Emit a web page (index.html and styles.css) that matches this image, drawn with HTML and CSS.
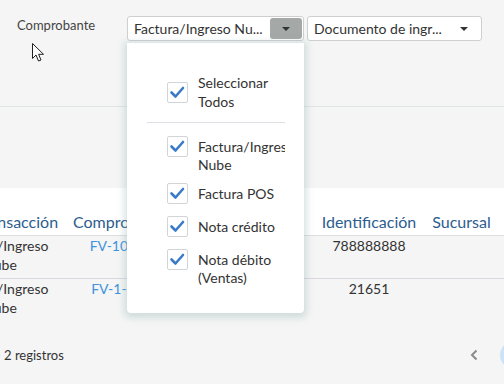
FILE: index.html
```html
<!DOCTYPE html>
<html lang="es">
<head>
    <meta charset="UTF-8">
    <meta name="viewport" content="width=device-width, initial-scale=1.0">
    <title>Documentos de ingreso</title>
    <link rel="stylesheet" href="styles.css">
</head>
<body>
    <div class="filters">
        <span class="field-label">Comprobante</span>
        <div class="select-wrap">
            <div class="select select-open">
                <span class="select-text">Factura/Ingreso Nu...</span>
                <span class="select-btn"><span class="caret"></span></span>
            </div>
            <div class="dropdown">
                <div class="check-all">
                    <span class="checkbox">
                        <svg width="21" height="21" viewBox="0 0 21 21"><polyline points="4.5,10.5 8.5,14.5 16,6" /></svg>
                    </span>
                    <span class="check-text">Seleccionar Todos</span>
                </div>
                <div class="divider"></div>
                <div class="option">
                    <span class="checkbox">
                        <svg width="21" height="21" viewBox="0 0 21 21"><polyline points="4.5,10.5 8.5,14.5 16,6" /></svg>
                    </span>
                    <span class="opt-text">Factura/Ingreso Nube</span>
                </div>
                <div class="option">
                    <span class="checkbox">
                        <svg width="21" height="21" viewBox="0 0 21 21"><polyline points="4.5,10.5 8.5,14.5 16,6" /></svg>
                    </span>
                    <span class="opt-text">Factura POS</span>
                </div>
                <div class="option">
                    <span class="checkbox">
                        <svg width="21" height="21" viewBox="0 0 21 21"><polyline points="4.5,10.5 8.5,14.5 16,6" /></svg>
                    </span>
                    <span class="opt-text">Nota crédito</span>
                </div>
                <div class="option">
                    <span class="checkbox">
                        <svg width="21" height="21" viewBox="0 0 21 21"><polyline points="4.5,10.5 8.5,14.5 16,6" /></svg>
                    </span>
                    <span class="opt-text">Nota débito (Ventas)</span>
                </div>
            </div>
        </div>
        <div class="select select-doc">
            <span class="select-text">Documento de ingr...</span>
            <span class="caret-box"><span class="caret"></span></span>
        </div>
    </div>

    <div class="table-area">
        <table class="grid">
            <colgroup>
                <col class="c-trans">
                <col class="c-comp">
                <col class="c-date">
                <col class="c-id">
                <col class="c-branch">
                <col class="c-total">
            </colgroup>
            <thead>
                <tr>
                    <th class="th-trans">Transacción</th>
                    <th class="th-comp">Comprobante</th>
                    <th></th>
                    <th>Identificación</th>
                    <th>Sucursal</th>
                    <th>Total</th>
                </tr>
            </thead>
            <tbody>
                <tr>
                    <td>Factura/Ingreso Nube</td>
                    <td><a href="#" class="doc-link">FV-1002</a></td>
                    <td></td>
                    <td>788888888</td>
                    <td></td>
                    <td>$ 12.000</td>
                </tr>
                <tr>
                    <td>Factura/Ingreso Nube</td>
                    <td><a href="#" class="doc-link">FV-1-18</a></td>
                    <td></td>
                    <td>21651</td>
                    <td></td>
                    <td>$ 8.500</td>
                </tr>
            </tbody>
        </table>
    </div>

    <div class="pager">
        <span class="pager-info">1 - 2 registros</span>
        <div class="pager-nav">
            <svg class="chevron" width="8" height="12" viewBox="0 0 8 12"><polyline points="6.5,1.5 2,6 6.5,10.5" /></svg>
            <span class="page-dot"></span>
        </div>
    </div>

    <svg class="cursor" width="13" height="20" viewBox="0 0 13 20">
        <path d="M0.5 0.5 L0.5 15.5 L4 12 L6.5 18 L9 17 L6.6 11.3 L11.5 11.3 Z" />
    </svg>
</body>
</html>
```

FILE: styles.css
```css
body {
    margin: 0;
    width: 504px;
    height: 384px;
    position: relative;
    overflow: hidden;
    background-color: #f5f5f5;
    font-family: Lato, "Noto Sans", sans-serif;
    color: #333;
}
.filters {
    display: flex;
    align-items: flex-start;
    height: 90px;
    padding-top: 16px;
    border-bottom: 1px solid #dfe5e5;
}
.field-label {
    width: 110px;
    padding-left: 17px;
    font-size: 13px;
    line-height: 18px;
    color: #444;
}
.select-wrap {
    position: relative;
}
.select {
    box-sizing: border-box;
    display: flex;
    align-items: stretch;
    height: 25px;
    padding: 1px 1px 1px 6px;
    background-color: white;
    border: 1px solid #cfcfcf;
    border-radius: 3px;
}
.select-open {
    width: 177px;
}
.select-doc {
    width: 175px;
    margin-left: 3px;
}
.select-text {
    flex: 1;
    font-size: 14px;
    line-height: 21px;
    white-space: nowrap;
    overflow: hidden;
}
.select-btn,
.caret-box {
    width: 32px;
    display: flex;
    align-items: center;
    justify-content: center;
    border-radius: 3px;
}
.select-btn {
    background-color: #a4a9a7;
}
.caret {
    width: 0;
    height: 0;
    border-left: 4px solid transparent;
    border-right: 4px solid transparent;
    border-top: 4px solid #333;
}
.dropdown {
    position: absolute;
    top: 27px;
    left: 0;
    z-index: 5;
    box-sizing: border-box;
    width: 177px;
    padding: 30px 19px 17px 20px;
    background-color: white;
    border-radius: 0 0 4px 4px;
    box-shadow: 0 2px 7px 3px rgba(140, 175, 175, 0.35);
}
.check-all {
    display: flex;
    align-items: center;
    padding-left: 20px;
}
.check-text {
    font-size: 14px;
    line-height: 19px;
    overflow: hidden;
}
.divider {
    height: 1px;
    margin: 11px 0 13px;
    background-color: #e3dfe7;
}
.option {
    box-sizing: border-box;
    display: flex;
    align-items: flex-start;
    min-height: 33px;
    padding: 0 0 9px 20px;
}
.opt-text {
    padding-top: 2px;
    font-size: 14px;
    line-height: 18px;
    overflow: hidden;
}
.checkbox {
    flex: none;
    box-sizing: border-box;
    width: 21px;
    height: 21px;
    margin-right: 10px;
    border: 1px solid #d2d5d8;
    border-radius: 2px;
    background-color: white;
}
.checkbox svg {
    display: block;
    margin: -1px;
}
.checkbox polyline {
    fill: none;
    stroke: #3a7bc8;
    stroke-width: 2.6;
    stroke-linecap: round;
    stroke-linejoin: round;
}
.table-area {
    margin-top: 81px;
    overflow: hidden;
}
.grid {
    width: 660px;
    margin-left: -60px;
    table-layout: fixed;
    border-collapse: collapse;
}
.c-trans { width: 120px; }
.c-comp { width: 114px; }
.c-date { width: 136px; }
.c-id { width: 118px; }
.c-branch { width: 67px; }
.c-total { width: 105px; }
th {
    padding: 24px 0 3px;
    background-color: white;
    color: #2c5d8f;
    font-size: 16px;
    font-weight: normal;
    line-height: 20px;
    text-align: center;
    white-space: nowrap;
    border-bottom: 1px solid #dedede;
}
.th-trans {
    padding-left: 34px;
}
.th-comp {
    padding-left: 8px;
}
td {
    padding: 0 4px 4px;
    font-size: 14px;
    line-height: 19px;
    text-align: center;
    vertical-align: top;
    border-bottom: 1px solid #dcd6e0;
}
tbody tr:last-child td {
    border-bottom: none;
}
.doc-link {
    color: #3d93dc;
    text-decoration: none;
}
.pager {
    display: flex;
    justify-content: space-between;
    align-items: center;
    height: 30px;
    margin-top: 19px;
}
.pager-info {
    margin-left: -15px;
    font-size: 13px;
}
.pager-nav {
    display: flex;
    align-items: center;
    gap: 22px;
    margin-right: -24px;
}
.chevron polyline {
    fill: none;
    stroke: #8a8a8a;
    stroke-width: 2;
}
.page-dot {
    width: 28px;
    height: 28px;
    border-radius: 50%;
    background-color: #cde2f6;
}
.cursor {
    position: absolute;
    left: 32px;
    top: 43px;
}
.cursor path {
    fill: white;
    stroke: #222;
    stroke-width: 1;
    stroke-linejoin: round;
}
```
